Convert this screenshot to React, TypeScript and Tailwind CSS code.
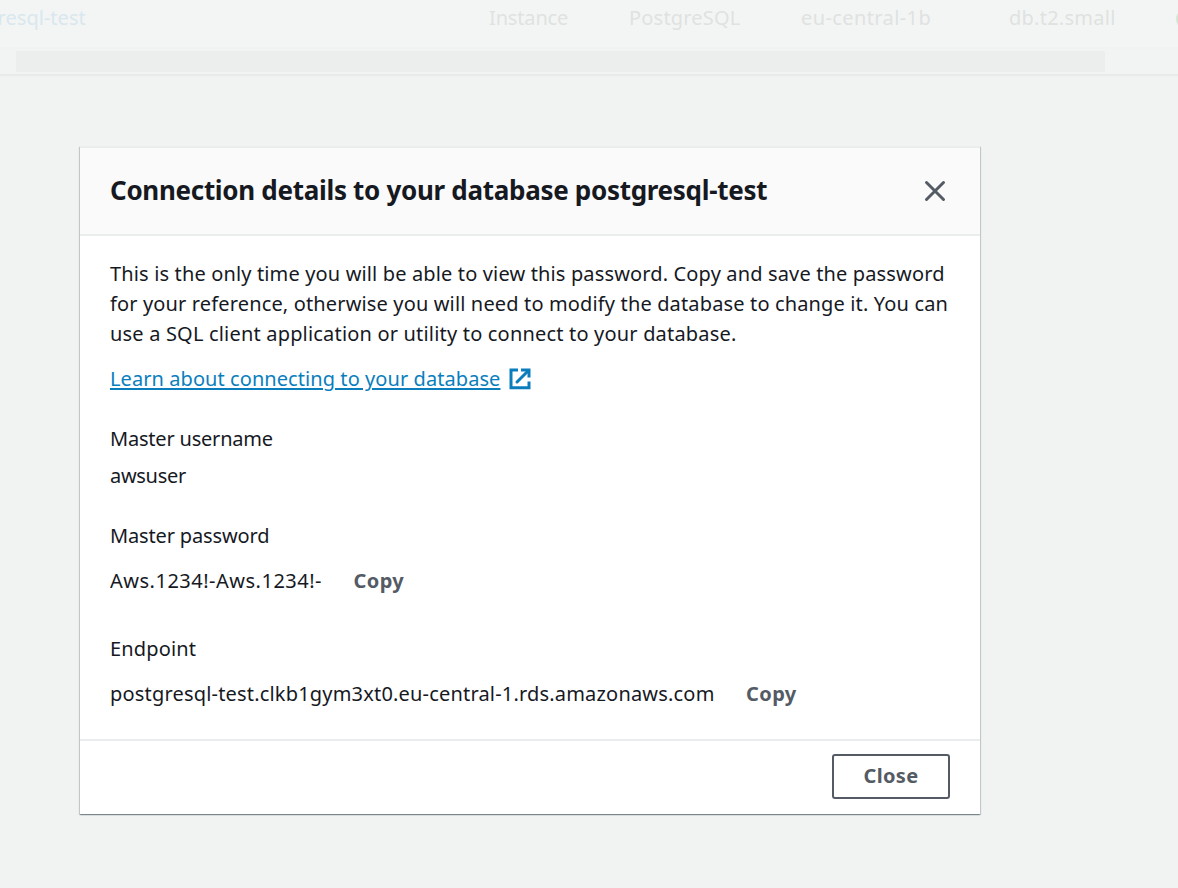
import type { ReactNode } from "react";

function CloseIcon() {
  return (
    <svg width="22" height="22" viewBox="0 0 22 22" fill="none" stroke="#545b64" strokeWidth="3" strokeLinecap="round" aria-hidden="true">
      <path d="M2.5 2.5 19.5 19.5M19.5 2.5 2.5 19.5" />
    </svg>
  );
}

function ExternalIcon() {
  return (
    <svg width="24" height="24" viewBox="0 0 24 24" fill="none" stroke="#0a7ebd" strokeWidth="3" aria-hidden="true">
      <path d="M10 3H3v17.7h18V14.5" />
      <path d="M13 3h8v7.5" />
      <path d="M20.5 3.5 9 15" strokeLinecap="round" />
    </svg>
  );
}

function CopyButton() {
  return <button className="font-bold tracking-[0.4px] text-[#545b64]">Copy</button>;
}

function Label({ children, className }: { children: ReactNode; className: string }) {
  return <dt className={className}>{children}</dt>;
}

function InstanceRow() {
  return (
    <div className="h-[76px] shrink-0 overflow-hidden border-b-2 border-[#e9ebeb] bg-[#f3f5f4]">
      <div className="flex h-[49px] items-start border-b-2 border-[#f1f3f2] pt-[3px] text-[#dfe2e1]">
        <div className="flex w-[489px] shrink-0">
          <span className="-ml-[56px] whitespace-nowrap tracking-[0.02px] text-[#d9e7ef]">postgresql-test</span>
        </div>
        <div className="w-[140px] shrink-0 tracking-[-0.15px]">Instance</div>
        <div className="w-[172px] shrink-0 tracking-[0.2px]">PostgreSQL</div>
        <div className="w-[208px] shrink-0 tracking-[0.4px]">eu-central-1b</div>
        <div className="w-[167px] shrink-0 tracking-[0.25px]">db.t2.small</div>
        <div className="mt-[6px] size-[20px] shrink-0 rounded-full border-2 border-[#d5e5d3]" />
      </div>
      <div className="bg-[#f2f4f3] pt-[2px] pb-[4px]">
        <div className="ml-4 h-[21px] w-[1089px] bg-[#eceeed]" />
      </div>
    </div>
  );
}

export default function App() {
  return (
    <div className="flex h-[888px] w-[1178px] flex-col overflow-hidden bg-[#f1f3f3] font-['Noto_Sans','Open_Sans',sans-serif] text-[20px] leading-[30px] text-[#16191f]">
      <InstanceRow />
      <section
        role="dialog"
        className="mt-[70px] ml-[80px] flex w-[900px] flex-col bg-white shadow-[0_1px_1px_0_rgba(0,28,36,0.3),1px_1px_1px_0_rgba(0,28,36,0.15),-1px_1px_1px_0_rgba(0,28,36,0.15)]"
      >
        <header className="flex h-[90px] items-center justify-between border-t-2 border-b-2 border-[#eaeded] bg-[#fafafa] pr-[34px] pl-[30px]">
          <h2 className="-mt-[2px] text-[26px] leading-[32px] font-bold tracking-[-0.3px] whitespace-nowrap">
            Connection details to your database postgresql-test
          </h2>
          <button aria-label="Dismiss">
            <CloseIcon />
          </button>
        </header>
        <div className="h-[503px] px-[30px] pt-[23px] whitespace-nowrap">
          <p>
            <span className="block tracking-[0.145px]">
              This is the only time you will be able to view this password. Copy and save the password
            </span>
            <span className="block tracking-[0.145px]">
              for your reference, otherwise you will need to modify the database to change it. You can
            </span>
            <span className="block tracking-[0.185px]">
              use a SQL client application or utility to connect to your database.
            </span>
          </p>
          <a className="mt-[15px] flex items-center gap-[8px] text-[#0a7ebd]">
            <span className="tracking-[0.07px] underline decoration-2 underline-offset-2">
              Learn about connecting to your database
            </span>
            <ExternalIcon />
          </a>
          <dl className="mt-[30px]">
            <Label className="tracking-[-0.2px]">Master username</Label>
            <dd className="mt-[7px] tracking-[-0.3px]">awsuser</dd>
            <Label className="mt-[30px] tracking-[-0.15px]">Master password</Label>
            <dd className="mt-[15px] flex">
              <span className="w-[243.5px] tracking-[0.5px]">Aws.1234!-Aws.1234!-</span>
              <CopyButton />
            </dd>
            <Label className="mt-[38px] tracking-[0.15px]">Endpoint</Label>
            <dd className="mt-[15px] flex">
              <span className="w-[636px] tracking-[0.185px]">
                postgresql-test.clkb1gym3xt0.eu-central-1.rds.amazonaws.com
              </span>
              <CopyButton />
            </dd>
          </dl>
        </div>
        <footer className="flex h-[75px] justify-end border-t-2 border-[#eaeded] pt-[13px] pr-[30px]">
          <button className="flex h-[45px] w-[118px] items-center justify-center rounded-[3px] border-2 border-[#545b64] pb-[2px] font-bold tracking-[0.3px] text-[#545b64]">
            Close
          </button>
        </footer>
      </section>
    </div>
  );
}
